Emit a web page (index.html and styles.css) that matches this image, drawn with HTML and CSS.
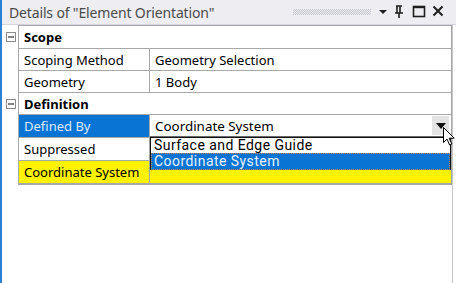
FILE: index.html
```html
<!DOCTYPE html>
<html>
<head>
<meta charset="utf-8">
<link rel="stylesheet" href="styles.css">
</head>
<body>
<div class="panel">
  <div class="titlebar">
    <span class="title">Details of "Element Orientation"</span>
    <span class="grip"></span>
    <span class="tbtns">
      <svg class="ico" width="10" height="14" viewBox="0 0 10 14"><path d="M1 5h8l-4 4z" fill="#1e1e1e"/></svg>
      <svg class="ico pin" width="10" height="14" viewBox="0 0 10 14"><path d="M2 1h6M3 1v7M6 1v7M1 8h8M5 8v5" stroke="#1e1e1e" stroke-width="1.6" fill="none"/></svg>
      <svg class="ico" width="14" height="14" viewBox="0 0 14 14"><rect x="1.5" y="1.5" width="11" height="10" stroke="#1e1e1e" stroke-width="1.6" fill="none"/><path d="M1.5 2.2h11" stroke="#1e1e1e" stroke-width="2"/></svg>
      <svg class="ico" width="12" height="14" viewBox="0 0 12 14"><path d="M1.5 1.5l9 9M10.5 1.5l-9 9" stroke="#1e1e1e" stroke-width="2" fill="none"/></svg>
    </span>
  </div>
  <div class="content">
    <div class="grid">
      <div class="row group first">
        <div class="gut"><span class="minus"></span></div>
        <div class="cell head">Scope</div>
      </div>
      <div class="row">
        <div class="gut"></div>
        <div class="cell lbl">Scoping Method</div>
        <div class="cell val">Geometry Selection</div>
      </div>
      <div class="row">
        <div class="gut"></div>
        <div class="cell lbl">Geometry</div>
        <div class="cell val">1 Body</div>
      </div>
      <div class="row group">
        <div class="gut"><span class="minus"></span></div>
        <div class="cell head">Definition</div>
      </div>
      <div class="row tall">
        <div class="gut"></div>
        <div class="cell lbl sel">Defined By</div>
        <div class="cell val combo-cell">
          <div class="combo">
            <span class="combo-text">Coordinate System</span>
            <span class="combo-btn"><svg width="10" height="6" viewBox="0 0 10 6"><path d="M0 0h10l-5 6z" fill="#111"/></svg></span>
          </div>
          <div class="list">
            <div class="opt">Surface and Edge Guide</div>
            <div class="opt cur">Coordinate System</div>
          </div>
        </div>
      </div>
      <div class="row tall">
        <div class="gut"></div>
        <div class="cell lbl">Suppressed</div>
        <div class="cell val"></div>
      </div>
      <div class="row tall last">
        <div class="gut"></div>
        <div class="cell lbl yel">Coordinate System</div>
        <div class="cell val yel"></div>
      </div>
    </div>
  </div>
  <svg class="cursor" width="14" height="20" viewBox="0 0 14 20"><path d="M0.5 0.5v15l3.5-3.5 2.6 6 2.2-1-2.6-5.8h5z" fill="#fff" stroke="#000" stroke-width="1"/></svg>
</div>
</body>
</html>
```
FILE: styles.css
```css
html, body {
  margin: 0;
  padding: 0;
  background: #ffffff;
}
body {
  width: 456px;
  height: 283px;
  overflow: hidden;
  font-family: "Noto Sans", "Open Sans", sans-serif;
  font-size: 13px;
  color: #000;
}
.panel {
  position: relative;
  height: 283px;
  border-left: 2px solid #2a82d4;
  box-sizing: border-box;
  display: flex;
  flex-direction: column;
}
.titlebar {
  height: 24px;
  background: #eeeef2;
  border-bottom: 1px solid #d4d4da;
  display: flex;
  align-items: center;
  padding-left: 7px;
}
.title {
  color: #4a4a4a;
  font-size: 14px;
  white-space: nowrap;
  letter-spacing: -0.15px;
}
.grip {
  flex: 1;
  height: 6px;
  margin: 0 7px 0 79px;
  background-image: repeating-conic-gradient(#c6c6ce 0 25%, transparent 0 50%);
  background-size: 2px 2px;
}
.tbtns {
  display: flex;
  align-items: center;
  gap: 6px;
  padding-right: 12px;
}
.ico { display: block; }
.pin { margin-right: 2px; }
.content {
  flex: 1;
  display: flex;
  border-right: 1px solid #c4c4c4;
  margin-right: 3px;
}
.grid {
  flex: 1;
  padding-left: 16px;
  display: flex;
  flex-direction: column;
}
.row {
  display: flex;
  height: 22px;
  position: relative;
}
.row.tall { height: 23px; }
.row.group.first { height: 24px; }
.row.last { height: 24px; }
.gut {
  width: 16px;
  margin-left: -16px;
  display: flex;
  align-items: center;
  justify-content: center;
}
.minus {
  width: 10px;
  height: 10px;
  border: 1px solid #8c8c8c;
  box-sizing: border-box;
  background: #fff;
  position: relative;
  left: 1px;
}
.minus::after {
  content: "";
  position: absolute;
  left: 1px;
  right: 1px;
  top: 3px;
  height: 2px;
  background: #333;
  transform: scaleY(0.6);
}
.cell {
  box-sizing: border-box;
  border-left: 1px solid #a8a8a8;
  border-bottom: 1px solid #a8a8a8;
  padding-left: 5px;
  display: flex;
  align-items: center;
  white-space: nowrap;
}
.row.last .cell { border-bottom: 2px solid #a8a8a8; }
.head {
  flex: 1;
  font-weight: bold;
  border-right: 1px solid #a8a8a8;
}
.lbl { width: 131px; }
.val {
  flex: 1;
  border-right: 1px solid #a8a8a8;
}
.first .cell { border-top: 1px solid #a8a8a8; }
.sel {
  background: #0a74d4;
  color: #d8ecff;
}
.yel { background: #fff200; }
.combo-cell {
  position: relative;
  padding: 0;
}
.combo {
  flex: 1;
  height: 100%;
  box-sizing: border-box;
  border-bottom: 1px solid #6a6a6a;
  display: flex;
  align-items: center;
  padding-left: 5px;
  font-size: 13.4px;
}
.combo-text { flex: 1; }
.combo-btn {
  width: 17px;
  height: 19px;
  background: #e3e3e3;
  margin-right: 2px;
  display: flex;
  align-items: center;
  justify-content: center;
}
.list {
  position: absolute;
  left: 0;
  right: 0;
  top: 22px;
  background: #fff;
  border: 1px solid #111;
  border-bottom: none;
  z-index: 2;
  font-family: Roboto, "Noto Sans", sans-serif;
  font-size: 14px;
  letter-spacing: 0.45px;
}
.opt {
  height: 15px;
  line-height: 15px;
  padding-left: 3px;
}
.opt.cur {
  height: 17px;
  line-height: 17px;
  background: #0a74d4;
  color: #e6f2ff;
  outline: 1px dotted #c08040;
  outline-offset: -1px;
}
.cursor {
  position: absolute;
  left: 441px;
  top: 127px;
  z-index: 5;
}
```
